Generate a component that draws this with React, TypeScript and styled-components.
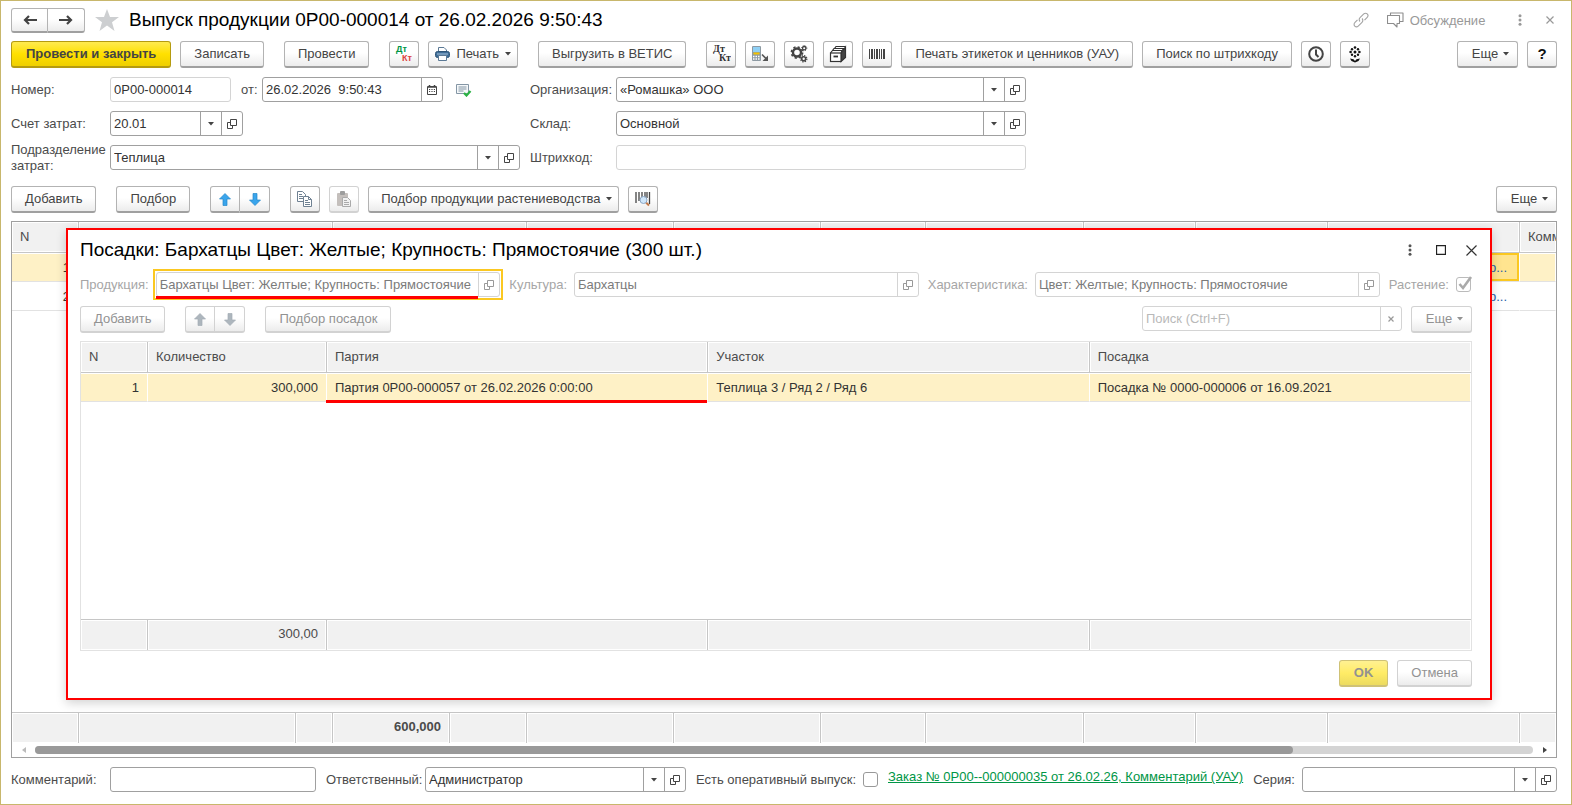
import React from "react";
import styled, { createGlobalStyle, css } from "styled-components";

const Global = createGlobalStyle`
  * { box-sizing: border-box; }
  body { margin: 0; background: #fff; }
  body, button, input { font-family: "Liberation Sans", Arial, sans-serif; font-size: 13px; color: #4b4b4b; }
  svg { flex: none; }
`;

const Window = styled.div`
  position: relative;
  display: flex;
  flex-direction: column;
  min-height: 100vh;
  padding: 6px 14px 12px 10px;
  border: 1px solid #c8b76c;
  background: #fff;
`;

const TitleBar = styled.header`
  display: flex;
  align-items: center;
  height: 26px;
  gap: 10px;
`;

const Title = styled.h1`
  margin: 0;
  flex: 1;
  font-size: 19px;
  line-height: 24px;
  font-weight: 400;
  color: #000;
  white-space: nowrap;
`;

const TitleTools = styled.div`
  display: flex;
  align-items: center;
`;

const PlainButton = styled.button<{ $w: number; $color?: string }>`
  display: inline-flex;
  align-items: center;
  justify-content: center;
  gap: 6px;
  min-width: ${(p) => p.$w}px;
  height: 24px;
  padding: 0;
  border: 0;
  background: none;
  color: ${(p) => p.$color ?? "#999"};
`;

const Bar = styled.div<{ $top: number }>`
  display: flex;
  align-items: center;
  justify-content: space-between;
  margin-top: ${(p) => p.$top}px;
`;

const Groups = styled.div`
  display: flex;
  gap: 20px;
`;

const Group = styled.div`
  display: flex;
  gap: 9px;
`;

type Kind = "text" | "icon" | "primary" | "menu" | "print";
const paddings: Record<Kind, string> = {
  text: "0 13px",
  icon: "0",
  primary: "0 14px",
  menu: "0 6px 0 12px",
  print: "0 6px",
};

const Button = styled.button<{ $kind?: Kind }>`
  display: inline-flex;
  align-items: center;
  justify-content: center;
  gap: ${(p) => (p.$kind === "menu" ? 5 : 6)}px;
  height: 27px;
  padding: ${(p) => paddings[p.$kind ?? "text"]};
  ${(p) => p.$kind === "icon" && css`width: 30px;`}
  ${(p) => p.$kind === "menu" && css`min-width: 61px;`}
  border: 1px solid #b3b3b3;
  border-bottom: 2px solid #a0a0a0;
  border-radius: 3px;
  background: linear-gradient(#fff 45%, #ececec);
  color: #444;
  font-size: 13px;
  line-height: 16px;
  white-space: nowrap;
  ${(p) => p.$kind === "primary" && css`
    border-color: #b59b10;
    background: linear-gradient(#ffea50, #ffe000 50%, #efcf00);
    font-weight: 700;
  `}
  &:disabled {
    border-color: #d2d2d2;
    color: #929292;
    ${(p) => p.$kind === "primary" && css`
      border-color: #cfc276;
      background: linear-gradient(#fff192, #ffec66 50%, #ecdb60);
    `}
  }
`;

const HelpButton = styled(Button)`
  color: #111;
  font-size: 15px;
  font-weight: 700;
`;

const Pair = styled.div`
  display: flex;
  & > button:first-child { border-radius: 3px 0 0 3px; }
  & > button:last-child { border-radius: 0 3px 3px 0; border-left: 0; }
`;

const NavPair = styled(Pair)`
  & > button { width: 37px; height: 25px; }
`;

const Form = styled.div`
  display: grid;
  grid-template-columns: minmax(0, 509px) minmax(0, 496px);
  column-gap: 10px;
  row-gap: 9px;
  margin-top: 9px;
`;

const FormRow = styled.div`
  display: flex;
  align-items: center;
  height: 25px;
`;

const Label = styled.label<{ $w?: number; $dim?: boolean; $indent?: boolean }>`
  flex: none;
  ${(p) => p.$w && css`width: ${p.$w}px;`}
  ${(p) => p.$indent && css`padding-left: 10px;`}
  line-height: 16px;
  color: ${(p) => (p.$dim ? "#a6a6a6" : "#4b4b4b")};
`;

const Box = styled.div<{ $w?: number; $dim?: boolean }>`
  display: flex;
  flex: ${(p) => (p.$w ? `0 1 ${p.$w}px` : "1 1 0")};
  min-width: 0;
  height: 25px;
  border: 1px solid ${(p) => (p.$dim ? "#d4d4d4" : "#a0a0a0")};
  border-radius: 3px;
  background: #fff;
  & > button { border-left: 1px solid ${(p) => (p.$dim ? "#d4d4d4" : "#a0a0a0")}; }
`;

const SearchBox = styled(Box)`
  flex: none;
  width: 260px;
`;

const Input = styled.input<{ $dim?: boolean }>`
  flex: 1;
  width: 0;
  min-width: 0;
  padding: 0 0 0 3px;
  border: 0;
  outline: 0;
  background: none;
  color: ${(p) => (p.$dim ? "#7b7b7b" : "#333")};
  &::placeholder { color: #b9b9b9; opacity: 1; }
`;

const FieldButton = styled.button`
  display: flex;
  flex: 0 0 21px;
  align-items: center;
  justify-content: center;
  padding: 0;
  border: 0;
  background: none;
  color: #444;
  &:disabled { color: #999; }
`;

const Check = styled.input`
  appearance: none;
  flex: none;
  width: 15px;
  height: 15px;
  margin: 0;
  border: 1px solid #999;
  border-radius: 3px;
  background: #fff;
`;

const CheckedBox = styled.span`
  display: grid;
  width: 16px;
  height: 16px;
  & > * { grid-area: 1 / 1; }
  & > input { border-color: #bbb; }
  & > svg { overflow: visible; }
`;

const Grid = styled.div<{ $dim?: boolean }>`
  display: flex;
  flex: 1;
  flex-direction: column;
  margin-top: 8px;
  overflow: hidden;
  border: 1px solid ${(p) => (p.$dim ? "#e2e2e2" : "#a0a0a0")};
`;

const GridSpace = styled.div`
  flex: 1;
`;

const Table = styled.table`
  width: 100%;
  table-layout: fixed;
  border-collapse: separate;
  border-spacing: 0;
`;

const Head = styled.th`
  height: 31px;
  padding: 0 0 2px 8px;
  border-right: 1px solid #c6c6c6;
  border-bottom: 1px solid #c6c6c6;
  background: #f1f1f1;
  box-shadow: inset 0 0 0 1px #fff;
  color: #4b4b4b;
  font-weight: 400;
  text-align: left;
  white-space: nowrap;
  overflow: hidden;
  &:last-child { border-right: 0; }
`;

const Cell = styled.td<{ $right?: boolean; $on?: boolean; $link?: boolean; $focus?: boolean }>`
  height: 29px;
  padding: 0 8px;
  border-right: 1px solid #fff;
  border-bottom: 1px solid #e2e2e2;
  background: ${(p) => (p.$focus ? "#ffe48f" : p.$on ? "#fef1c6" : "#fff")};
  box-shadow: ${(p) => (p.$focus ? "inset 0 0 0 2px #fbc821" : p.$on ? "inset 0 1px #fff" : "none")};
  color: ${(p) => (p.$link ? "#2a5ea8" : "#333")};
  text-align: ${(p) => (p.$right ? "right" : "left")};
  white-space: nowrap;
  ${(p) => p.$link && css`padding-right: 12px;`}
`;

const Total = styled.td<{ $bold?: boolean }>`
  height: 31px;
  padding: 0 8px 4px;
  border-top: 1px solid #c6c6c6;
  border-right: 1px solid #c6c6c6;
  background: #f1f1f1;
  box-shadow: inset 0 0 0 1px #fff;
  font-weight: ${(p) => (p.$bold ? 700 : 400)};
  text-align: right;
  &:last-child { border-right: 0; }
`;

const ScrollRow = styled.div`
  display: flex;
  align-items: center;
  height: 14px;
  padding: 0 8px;
  gap: 7px;
`;

const Track = styled.div`
  flex: 1;
  height: 8px;
  border-radius: 4px;
  background: #d4d4d4;
`;

const Thumb = styled.div`
  width: 84%;
  height: 8px;
  border-radius: 4px;
  background: #999;
`;

const Footer = styled.footer`
  display: flex;
  align-items: center;
  gap: 10px;
  margin-top: 9px;
`;

const Linked = styled.div<{ $grow?: boolean }>`
  display: flex;
  align-items: center;
  gap: 7px;
  min-width: 0;
  flex: ${(p) => (p.$grow ? "1 1 auto" : "none")};
`;

const OrderLink = styled.a`
  align-self: flex-start;
  padding-top: 1px;
  line-height: 18px;
  color: #009646;
  white-space: nowrap;
`;

const Dialog = styled.section`
  position: absolute;
  top: 227px;
  right: 79px;
  bottom: 104px;
  left: 65px;
  display: flex;
  flex-direction: column;
  padding: 7px 18px 11px 12px;
  border: 2px solid #f00;
  background: #fff;
  box-shadow: 0 3px 10px rgba(0, 0, 0, 0.18);
`;

const DialogTitleBar = styled(TitleBar)`
  margin-right: -14px;
`;

const DialogFields = styled.div`
  display: flex;
  align-items: center;
  gap: 9px;
  margin-top: 9px;
`;

const Focus = styled.div`
  display: flex;
  flex: 1 1 0;
  min-width: 0;
  margin: -3px;
  padding: 1px;
  border: 2px solid #fbc821;
`;

const Marked = styled.div`
  position: relative;
  display: flex;
  flex: 1 1 0;
  min-width: 0;
  &::after {
    content: "";
    position: absolute;
    left: 0;
    right: 22px;
    bottom: -2px;
    height: 3px;
    background: #f00;
  }
`;

const MarkedCell = styled(Cell)`
  position: relative;
  &::after {
    content: "";
    position: absolute;
    left: -1px;
    right: 0;
    bottom: -2px;
    height: 3px;
    background: #f00;
  }
`;

const DialogActions = styled.div`
  display: flex;
  justify-content: flex-end;
  gap: 9px;
  margin-top: 9px;
`;

const Caret = () => (
  <svg width="6" height="4" viewBox="0 0 6 4"><path d="M0 0h6L3 3.5z" fill="currentColor" /></svg>
);
const OpenIcon = () => (
  <svg width="10" height="10" viewBox="0 0 10 10" fill="none" stroke="currentColor">
    <path d="M3.5 .5h6v6h-6zM3 3.500H.5v6h5V7" />
  </svg>
);
const ArrowH = ({ flip }: { flip?: boolean }) => (
  <svg width="14" height="10" viewBox="0 0 14 10" fill="none" stroke="#444" strokeWidth="2.200">
    {flip ? <path d="M0 5h12M8 1l4 4-4 4" /> : <path d="M14 5H2M6 1L2 5l4 4" />}
  </svg>
);
const ArrowV = ({ down, dim }: { down?: boolean; dim?: boolean }) => (
  <svg width="12" height="13" viewBox="0 0 12 13">
    <path d={down ? "M6 12.500L.5 7H4V.5h4V7h3.500z" : "M6 .5L.5 6H4v6.500h4V6h3.500z"} fill={dim ? "#adb6bd" : "#3aa5ec"} stroke={dim ? "#a3adb4" : "#2588c9"} strokeWidth=".7" />
  </svg>
);
const Star = () => (
  <svg width="24" height="22" viewBox="0 0 24 22"><path d="M12 0l3 8h9l-7 5.200L19.500 22 12 16.500 4.500 22 7 13.200 0 8h9z" fill="#cdcfd1" /></svg>
);
const DtKt = ({ mono }: { mono?: boolean }) => (
  <svg width="20" height="20" viewBox="0 0 20 20" fontWeight="700" fontFamily={mono ? '"Liberation Serif", serif' : '"Liberation Sans", sans-serif'} fontSize={mono ? 10 : 9}>
    <text x="2" y="8" fill={mono ? "#333" : "#009646"}>Дт</text>
    <text x="8" y="17" fill={mono ? "#333" : "#dc4340"}>Кт</text>
  </svg>
);
const Printer = () => (
  <svg width="15" height="14" viewBox="0 0 15 14">
    <path d="M3.500 5V.5h5.500l2.500 2.500v2" fill="#fff" stroke="#5b7995" />
    <rect x=".5" y="4.500" width="14" height="6" rx="2" fill="#3f6d97" stroke="#2f5577" />
    <path d="M2 7h11" stroke="#a9c4dc" />
    <path d="M3.500 8.500h8v5h-8z" fill="#fff" stroke="#5b7995" />
  </svg>
);
const Terminal = () => (
  <svg width="18" height="18" viewBox="0 0 18 18">
    <rect x="1" y="1" width="9" height="15" rx="1" fill="#8d9aa3" />
    <rect x="2" y="2" width="7" height="5" fill="#8fd0f5" />
    <path d="M2.500 8.500h6" stroke="#f5c400" strokeWidth="2" />
    <path d="M2 11.500h7M2 14h7" stroke="#fff" strokeDasharray="1.500 1" strokeWidth="1.300" />
    <path d="M11 9.500l4.500 4.500" stroke="#555" strokeWidth="1.600" />
    <path d="M17 10.500V16h-5.500z" fill="#555" />
  </svg>
);
const Gears = () => (
  <svg width="18" height="18" viewBox="0 0 18 18" fill="none" stroke="#444">
    <circle cx="7" cy="7.500" r="4" strokeWidth="2.400" />
    <circle cx="7" cy="7.500" r="5.600" strokeWidth="1.600" strokeDasharray="2.200 2.200" />
    <circle cx="14.200" cy="3.200" r="1.700" strokeWidth="1.300" />
    <circle cx="14.200" cy="3.200" r="2.600" strokeWidth="1" strokeDasharray="1 1.040" />
    <circle cx="13.700" cy="13.700" r="2" strokeWidth="1.600" />
    <circle cx="13.700" cy="13.700" r="3.200" strokeWidth="1.200" strokeDasharray="1.250 1.260" />
  </svg>
);
const Archive = () => (
  <svg width="18" height="18" viewBox="0 0 18 18" fill="none" stroke="#333" strokeWidth="1.200">
    <path d="M12 16.500l4.500-4V2l-4.500 6z" fill="#444" />
    <path d="M5.500 3.500l1.500-2h9.500M3.500 5.500l1.500-2h9.500l-1.500 2.500M1.500 8l2-2.500H13L12 8" fill="#fff" />
    <rect x="1.500" y="8" width="10.500" height="8.500" fill="#fff" />
    <path d="M4.500 11.500h4.500" strokeWidth="1.800" />
  </svg>
);
const Barcode = () => (
  <svg width="18" height="12" viewBox="0 0 18 12" fill="#444">
    <path d="M1 1h1v10H1zM3 1h2v10H3zM6 1h1v10H6zM8 1h2v10H8zM11 1h1v10h-1zM13 1h1v10h-1zM15 1h2v10h-2z" />
  </svg>
);
const Clock = () => (
  <svg width="16" height="16" viewBox="0 0 16 16" fill="none" stroke="#444" strokeWidth="2">
    <circle cx="8" cy="8" r="6.800" /><path d="M8 3.500V8.500l2.500 2.500" />
  </svg>
);
const Flower = () => (
  <svg width="12" height="17" viewBox="0 0 12 17" fill="#111">
    <circle cx="6" cy="6" r="1.500" /><circle cx="6" cy="1.500" r="1.300" /><circle cx="6" cy="10.300" r="1.200" />
    <circle cx="1.600" cy="6" r="1.300" /><circle cx="10.400" cy="6" r="1.300" />
    <circle cx="3" cy="3.200" r="1.200" /><circle cx="9" cy="3.200" r="1.200" />
    <circle cx="3" cy="8.800" r="1.200" /><circle cx="9" cy="8.800" r="1.200" />
    <path d="M1 12.500l3.500 .7L6 15l1.500-1.800 3.500-.7-1.500 2.500-3.500 1.500-3.500-1.500z" />
  </svg>
);
const Calendar = () => (
  <svg width="10" height="10" viewBox="0 0 10 10">
    <path d="M.5 1.500h9v8h-9z" fill="none" stroke="#444" />
    <path d="M1 2h8M2.500 0v2M7.500 0v2" stroke="#444" strokeWidth="1.500" />
    <path d="M2 4.500h6M2 6.500h6" stroke="#444" strokeDasharray="1.200 1.200" />
  </svg>
);
const Posted = () => (
  <svg width="16" height="14" viewBox="0 0 16 14" fill="none">
    <path d="M.5 1.500h12v9H.5z" fill="#f5f8fa" stroke="#8496a5" />
    <path d="M2.500 4h8M2.500 6h8M2.500 8h5" stroke="#8496a5" />
    <path d="M8 10l2.500 2.500L14.500 8" stroke="#2bb344" strokeWidth="2.200" />
  </svg>
);
const Copy = () => (
  <svg width="16" height="16" viewBox="0 0 16 16" fill="#fff" stroke="#6f8192">
    <path d="M.5 .5h5l3 3v7h-8z" /><path d="M2 3.500h3M2 5.500h4M2 7.500h4" />
    <path d="M6.500 5.500h5l3 3v7h-8z" /><path d="M11.500 5.500v3h3M8 9.500h3M8 11.500h5M8 13.500h5" fill="none" />
  </svg>
);
const Paste = () => (
  <svg width="16" height="16" viewBox="0 0 16 16">
    <rect x="1" y="2" width="11" height="13" rx="1" fill="#c4bfbc" /><rect x="4" y="0" width="5" height="4" rx="1" fill="#9d9d9d" />
    <path d="M6.500 6.500h5l3 3v6h-8z" fill="#f1f1f1" stroke="#aaa" /><path d="M8 9.500h3M8 11.500h5M8 13.500h5" stroke="#aaa" />
  </svg>
);
const BarcodeSearch = () => (
  <svg width="16" height="16" viewBox="0 0 16 16">
    <path d="M1 1v11M4 1v9M7 1v6M10 1v5M12 1v6M14.500 1v12" stroke="#444" strokeWidth="1.300" />
    <path d="M11 11.500l3 3" stroke="#c47a4a" strokeWidth="2" />
    <circle cx="8.500" cy="9" r="3.500" fill="#cfe6fa" stroke="#8ba6c4" />
  </svg>
);
const LinkIcon = () => (
  <svg width="16" height="16" viewBox="0 0 16 16" fill="none" stroke="#a3a3a3" strokeWidth="1.100">
    <path d="M7 9.500a2.600 2.600 0 0 1 0-3.800L10.800 1.900a2.300 2.300 0 0 1 3.400 3.400L11.500 8.200M9 6.500a2.600 2.600 0 0 1 0 3.800l-3.800 3.800a2.300 2.300 0 0 1-3.400-3.400L4.500 7.800" />
  </svg>
);
const Chat = () => (
  <svg width="17" height="16" viewBox="0 0 17 16" fill="none" stroke="#8d8d8d" strokeWidth="1.100">
    <path d="M.5 3.500h12v8H10v3.500l-3.500-3.500h-6zM3.500 3.500V1H16v8.500h-3.500" strokeLinejoin="round" />
  </svg>
);
const Dots = () => (
  <svg width="4" height="12" viewBox="0 0 4 12" fill="currentColor"><circle cx="2" cy="1.700" r="1.500" /><circle cx="2" cy="6" r="1.500" /><circle cx="2" cy="10.300" r="1.500" /></svg>
);
const Cross = ({ size = 8 }: { size?: number }) => (
  <svg width={size} height={size} viewBox={`0 0 ${size} ${size}`} stroke="currentColor" strokeWidth="1.200"><path d={`M.5 .5L${size - 0.5} ${size - 0.5}M${size - 0.5} .5L.5 ${size - 0.5}`} /></svg>
);
const Square = () => (
  <svg width="10" height="10" viewBox="0 0 10 10"><path d="M.5 .5h9v9h-9z" fill="none" stroke="#222" strokeWidth="1.300" /></svg>
);
const ScrollArrow = ({ right }: { right?: boolean }) => (
  <svg width="8" height="6" viewBox="0 0 8 6"><path d={right ? "M3 0v6l4-3z" : "M6 0v6L2 3z"} fill={right ? "#444" : "#bbb"} /></svg>
);
const Tick = () => (
  <svg width="16" height="16" viewBox="0 0 16 16" fill="none" stroke="#aaa" strokeWidth="2.600"><path d="M3.500 7l3.500 4L15 0" /></svg>
);

type FieldProps = { id: string; value?: string; w?: number; dim?: boolean; pick?: boolean; open?: boolean };
const Field = ({ id, value = "", w, dim, pick, open }: FieldProps) => (
  <Box $w={w} $dim={dim}>
    <Input id={id} defaultValue={value} disabled={dim && open} readOnly={dim} $dim={dim && open} />
    {pick && <FieldButton aria-label="Выбрать"><Caret /></FieldButton>}
    {open && <FieldButton aria-label="Открыть" disabled={dim}><OpenIcon /></FieldButton>}
  </Box>
);

const MoreButton = ({ disabled }: { disabled?: boolean }) => (
  <Button $kind="menu" disabled={disabled}>Еще<Caret /></Button>
);

const outerCols = [67, 217, 37, 117, 77, 147, 147, 105, 158, 112, 132, 192];
const dialogCols = [67, 179];
const Cols = ({ list, rest = 1 }: { list: number[]; rest?: number }) => (
  <colgroup>
    {list.map((w, i) => <col key={i} style={{ width: w }} />)}
    {Array.from({ length: rest }, (_, i) => <col key={`rest${i}`} />)}
  </colgroup>
);
const headSpans = [2, 2, 1, 1, 1, 1, 1, 1, 1];

const OuterRow = ({ n, on }: { n: number; on?: boolean }) => (
  <tr>
    <Cell $right $on={on}>{n}</Cell>
    {outerCols.slice(2).map((_, i) => <Cell key={i} $on={on} />)}
    <Cell $right $link $on={on} $focus={on}>р...</Cell>
    <Cell $on={on} />
  </tr>
);

export default function App() {
  return (
    <>
      <Global />
      <Window>
        <TitleBar>
          <NavPair>
            <Button $kind="icon" aria-label="Назад"><ArrowH /></Button>
            <Button $kind="icon" aria-label="Вперед"><ArrowH flip /></Button>
          </NavPair>
          <Star />
          <Title>Выпуск продукции 0Р00-000014 от 26.02.2026 9:50:43</Title>
          <TitleTools>
            <PlainButton $w={28} aria-label="Ссылка"><LinkIcon /></PlainButton>
            <PlainButton $w={122}><Chat />Обсуждение</PlainButton>
            <PlainButton $w={46} aria-label="Меню"><Dots /></PlainButton>
            <PlainButton $w={14} aria-label="Закрыть"><Cross /></PlainButton>
          </TitleTools>
        </TitleBar>

        <Bar $top={8}>
          <Groups>
            <Group>
              <Button $kind="primary">Провести и закрыть</Button>
              <Button>Записать</Button>
            </Group>
            <Button>Провести</Button>
            <Group>
              <Button $kind="icon" aria-label="Проводки"><DtKt /></Button>
              <Button $kind="print"><Printer />Печать<Caret /></Button>
            </Group>
            <Button>Выгрузить в ВЕТИС</Button>
            <Group>
              <Button $kind="icon" aria-label="Дт Кт"><DtKt mono /></Button>
              <Button $kind="icon" aria-label="Терминал"><Terminal /></Button>
              <Button $kind="icon" aria-label="Настройки"><Gears /></Button>
              <Button $kind="icon" aria-label="Архив"><Archive /></Button>
              <Button $kind="icon" aria-label="Штрихкод"><Barcode /></Button>
              <Button>Печать этикеток и ценников (УАУ)</Button>
              <Button>Поиск по штрихкоду</Button>
              <Button $kind="icon" aria-label="История"><Clock /></Button>
              <Button $kind="icon" aria-label="Растение"><Flower /></Button>
            </Group>
          </Groups>
          <Group>
            <MoreButton />
            <HelpButton $kind="icon">?</HelpButton>
          </Group>
        </Bar>

        <Form>
          <FormRow>
            <Label $w={99} htmlFor="num">Номер:</Label>
            <Field id="num" value="0Р00-000014" w={121} dim />
            <Label $w={31} $indent htmlFor="date">от:</Label>
            <Box $w={181}>
              <Input id="date" defaultValue="26.02.2026  9:50:43" />
              <FieldButton aria-label="Календарь"><Calendar /></FieldButton>
            </Box>
            <PlainButton $w={42} aria-label="Проведен"><Posted /></PlainButton>
          </FormRow>
          <FormRow>
            <Label $w={86} htmlFor="org">Организация:</Label>
            <Field id="org" value="«Ромашка» ООО" pick open />
          </FormRow>
          <FormRow>
            <Label $w={99} htmlFor="acc">Счет затрат:</Label>
            <Field id="acc" value="20.01" w={133} pick open />
          </FormRow>
          <FormRow>
            <Label $w={86} htmlFor="store">Склад:</Label>
            <Field id="store" value="Основной" pick open />
          </FormRow>
          <FormRow>
            <Label $w={99} htmlFor="dep">Подразделение затрат:</Label>
            <Field id="dep" value="Теплица" pick open />
          </FormRow>
          <FormRow>
            <Label $w={86} htmlFor="code">Штрихкод:</Label>
            <Field id="code" dim />
          </FormRow>
        </Form>

        <Bar $top={16}>
          <Groups>
            <Button>Добавить</Button>
            <Button>Подбор</Button>
            <Pair>
              <Button $kind="icon" aria-label="Вверх"><ArrowV /></Button>
              <Button $kind="icon" aria-label="Вниз"><ArrowV down /></Button>
            </Pair>
            <Group>
              <Button $kind="icon" aria-label="Копировать"><Copy /></Button>
              <Button $kind="icon" aria-label="Вставить" disabled><Paste /></Button>
              <Button $kind="menu">Подбор продукции растениеводства<Caret /></Button>
              <Button $kind="icon" aria-label="Поиск по штрихкоду"><BarcodeSearch /></Button>
            </Group>
          </Groups>
          <MoreButton />
        </Bar>

        <Grid>
          <Table>
            <Cols list={outerCols} />
            <thead>
              <tr>
                <Head>N</Head>
                {headSpans.map((s, i) => <Head key={i} colSpan={s} />)}
                <Head>Комм</Head>
              </tr>
            </thead>
            <tbody>
              <OuterRow n={1} on />
              <OuterRow n={2} />
            </tbody>
          </Table>
          <GridSpace />
          <Table>
            <Cols list={outerCols} />
            <tbody>
              <tr>
                {[...outerCols, 0].map((_, i) => <Total key={i} $bold>{i === 3 ? "600,000" : ""}</Total>)}
              </tr>
            </tbody>
          </Table>
          <ScrollRow>
            <ScrollArrow />
            <Track><Thumb /></Track>
            <ScrollArrow right />
          </ScrollRow>
        </Grid>

        <Footer>
          <Label $w={89} htmlFor="comment">Комментарий:</Label>
          <Field id="comment" w={206} />
          <Label $w={89} htmlFor="resp">Ответственный:</Label>
          <Field id="resp" value="Администратор" w={261} pick open />
          <Linked>
            <Label htmlFor="oper">Есть оперативный выпуск:</Label>
            <Check type="checkbox" id="oper" />
          </Linked>
          <OrderLink href="#order">Заказ № 0Р00--000000035 от 26.02.26, Комментарий (УАУ)</OrderLink>
          <Linked $grow>
            <Label htmlFor="series">Серия:</Label>
            <Field id="series" pick open />
          </Linked>
        </Footer>

        <Dialog role="dialog" aria-label="Посадки">
          <DialogTitleBar as="div">
            <Title as="h2">Посадки: Бархатцы Цвет: Желтые; Крупность: Прямостоячие (300 шт.)</Title>
            <TitleTools>
              <PlainButton $w={32} $color="#555" aria-label="Меню"><Dots /></PlainButton>
              <PlainButton $w={30} aria-label="Развернуть"><Square /></PlainButton>
              <PlainButton $w={30} $color="#333" aria-label="Закрыть"><Cross size={11} /></PlainButton>
            </TitleTools>
          </DialogTitleBar>
          <DialogFields>
            <Linked $grow>
              <Label $dim htmlFor="prod">Продукция:</Label>
              <Focus><Marked><Field id="prod" value="Бархатцы Цвет: Желтые; Крупность: Прямостоячие" dim open /></Marked></Focus>
            </Linked>
            <Linked $grow>
              <Label $dim htmlFor="cult">Культура:</Label>
              <Field id="cult" value="Бархатцы" dim open />
            </Linked>
            <Linked $grow>
              <Label $dim htmlFor="char">Характеристика:</Label>
              <Field id="char" value="Цвет: Желтые; Крупность: Прямостоячие" dim open />
            </Linked>
            <Linked>
              <Label $dim htmlFor="plant">Растение:</Label>
              <CheckedBox><Check type="checkbox" id="plant" defaultChecked disabled /><Tick /></CheckedBox>
            </Linked>
          </DialogFields>
          <Bar $top={9}>
            <Groups>
              <Button disabled>Добавить</Button>
              <Pair>
                <Button $kind="icon" disabled aria-label="Вверх"><ArrowV dim /></Button>
                <Button $kind="icon" disabled aria-label="Вниз"><ArrowV down dim /></Button>
              </Pair>
              <Button disabled>Подбор посадок</Button>
            </Groups>
            <Group>
              <FormRow as="div">
                <SearchBox $dim>
                  <Input aria-label="Поиск" placeholder="Поиск (Ctrl+F)" />
                  <FieldButton disabled aria-label="Очистить"><Cross size={6} /></FieldButton>
                </SearchBox>
              </FormRow>
              <MoreButton disabled />
            </Group>
          </Bar>
          <Grid $dim>
            <Table>
              <Cols list={dialogCols} rest={3} />
              <thead>
                <tr><Head>N</Head><Head>Количество</Head><Head>Партия</Head><Head>Участок</Head><Head>Посадка</Head></tr>
              </thead>
              <tbody>
                <tr>
                  <Cell $on $right>1</Cell>
                  <Cell $on $right>300,000</Cell>
                  <MarkedCell $on>Партия 0Р00-000057 от 26.02.2026 0:00:00</MarkedCell>
                  <Cell $on>Теплица 3 / Ряд 2 / Ряд 6</Cell>
                  <Cell $on>Посадка № 0000-000006 от 16.09.2021</Cell>
                </tr>
              </tbody>
            </Table>
            <GridSpace />
            <Table>
              <Cols list={dialogCols} rest={3} />
              <tbody>
                <tr><Total /><Total>300,00</Total><Total /><Total /><Total /></tr>
              </tbody>
            </Table>
          </Grid>
          <DialogActions>
            <Button $kind="primary" disabled>OK</Button>
            <Button disabled>Отмена</Button>
          </DialogActions>
        </Dialog>
      </Window>
    </>
  );
}
